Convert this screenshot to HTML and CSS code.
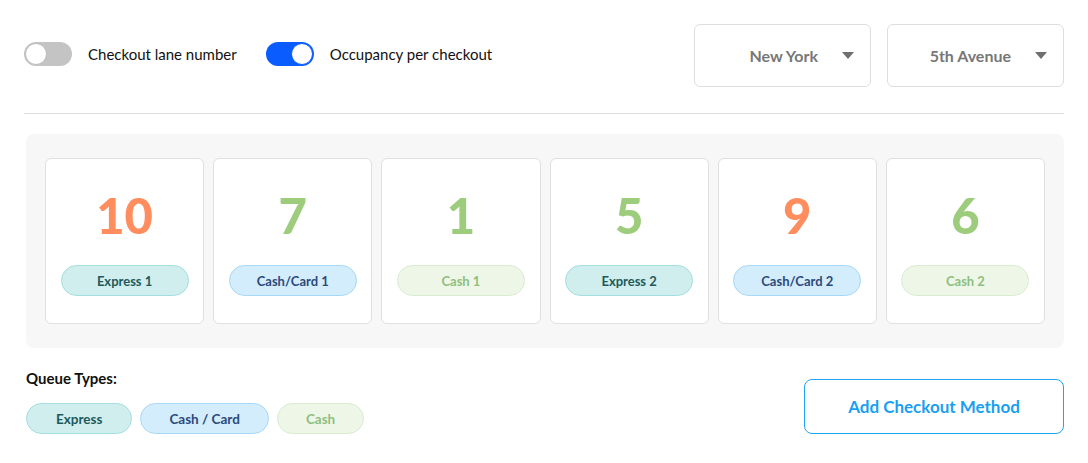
FILE: index.html
```html
<!DOCTYPE html>
<html lang="en">
  <head>
    <meta charset="UTF-8" />
    <meta name="viewport" content="width=device-width, initial-scale=1.0" />
    <title>Checkout Occupancy</title>
    <link rel="stylesheet" href="styles.css">
  </head>
  <body>
    <div class="container">
      <!-- Toolbar -->
      <div class="toolbar">
        <div class="toggles">
          <label class="toggle">
            <span class="switch"></span>
            <span>Checkout lane number</span>
          </label>
          <label class="toggle">
            <span class="switch on"></span>
            <span>Occupancy per checkout</span>
          </label>
        </div>
        <div class="selects">
          <div class="select"><span>New York</span><i class="caret"></i></div>
          <div class="select"><span>5th Avenue</span><i class="caret"></i></div>
        </div>
      </div>

      <hr class="divider" />

      <!-- Checkout lanes -->
      <div class="lanes">
        <div class="lane">
          <div class="count busy">10</div>
          <span class="badge express">Express 1</span>
        </div>
        <div class="lane">
          <div class="count free">7</div>
          <span class="badge card">Cash/Card 1</span>
        </div>
        <div class="lane">
          <div class="count free">1</div>
          <span class="badge cash">Cash 1</span>
        </div>
        <div class="lane">
          <div class="count free">5</div>
          <span class="badge express">Express 2</span>
        </div>
        <div class="lane">
          <div class="count busy">9</div>
          <span class="badge card">Cash/Card 2</span>
        </div>
        <div class="lane">
          <div class="count free">6</div>
          <span class="badge cash">Cash 2</span>
        </div>
      </div>

      <!-- Legend -->
      <div class="footer">
        <div class="legend">
          <h3>Queue Types:</h3>
          <div class="legend-items">
            <span class="badge express">Express</span>
            <span class="badge card">Cash / Card</span>
            <span class="badge cash">Cash</span>
          </div>
        </div>
        <button class="add-btn">Add Checkout Method</button>
      </div>
    </div>
  </body>
</html>
```

FILE: styles.css
```css
body {
  font-family: Lato, "Open Sans", sans-serif;
  margin: 0;
  padding: 0;
  background: #fff;
  color: #111;
}
.container {
  padding: 24px 24px 20px 24px;
}
.toolbar {
  display: flex;
  justify-content: space-between;
  align-items: center;
}
.toggles {
  display: flex;
  align-items: center;
  gap: 26px;
  margin-top: -4px;
}
.toggle {
  display: flex;
  align-items: center;
  gap: 16px;
  font-size: 15px;
}
.toggle + .toggle {
  margin-left: 3px;
}
.switch {
  position: relative;
  width: 48px;
  height: 24px;
  border-radius: 12px;
  background: #c4c4c4;
}
.switch::after {
  content: "";
  position: absolute;
  left: 1px;
  top: 1px;
  width: 20px;
  height: 20px;
  border-radius: 50%;
  background: #fff;
  border: 1px solid #bdbdbd;
}
.switch.on {
  background: #0a5cff;
}
.switch.on::after {
  left: auto;
  right: 1px;
  border-color: #0a5cff;
}
.selects {
  display: flex;
  gap: 16px;
}
.select {
  width: 177px;
  height: 63px;
  box-sizing: border-box;
  border: 1px solid #dedede;
  border-radius: 6px;
  display: flex;
  align-items: center;
  justify-content: flex-end;
  gap: 24px;
  padding-right: 16px;
  font-size: 16px;
  font-weight: 700;
  color: #777;
}
.caret {
  width: 0;
  height: 0;
  border-left: 6px solid transparent;
  border-right: 6px solid transparent;
  border-top: 7px solid #6f6f6f;
}
.divider {
  border: none;
  border-top: 1px solid #ddd;
  margin: 26px 0 20px;
}
.lanes {
  display: flex;
  gap: 9px;
  padding: 24px 19px;
  background: #f7f7f7;
  border-radius: 8px;
  margin-left: 2px;
}
.lane {
  flex: 1;
  height: 166px;
  box-sizing: border-box;
  background: #fff;
  border: 1px solid #e0e0e0;
  border-radius: 6px;
  display: flex;
  flex-direction: column;
  align-items: center;
  padding-top: 27px;
}
.count {
  font-size: 49px;
  font-weight: 900;
  line-height: 58px;
  margin-bottom: 21px;
}
.count.busy {
  color: #ff8d5e;
}
.count.free {
  color: #9dcd7c;
}
.badge {
  display: inline-flex;
  align-items: center;
  justify-content: center;
  height: 31px;
  box-sizing: border-box;
  border-radius: 16px;
  font-size: 13px;
  font-weight: 700;
  border: 1px solid;
}
.lane .badge {
  width: 128px;
}
.badge.express {
  background: #d0eeee;
  border-color: #a3dfe0;
  color: #1e5a5c;
}
.badge.card {
  background: #d3edfd;
  border-color: #a7d8f7;
  color: #2c4a7a;
}
.badge.cash {
  background: #eef6e8;
  border-color: #d9ecd0;
  color: #8fbf7e;
}
.footer {
  display: flex;
  justify-content: space-between;
  align-items: flex-start;
  padding-left: 2px;
}
.legend h3 {
  margin: 21px 0 16px;
  font-size: 15px;
  font-weight: 700;
}
.legend-items {
  display: flex;
  gap: 8px;
}
.legend-items .badge {
  padding: 0 28px;
  font-size: 13.5px;
}
.legend-items .badge.express {
  padding: 0 29px;
}
.add-btn {
  width: 260px;
  height: 55px;
  margin-top: 31px;
  background: #fff;
  border: 1px solid #1ea4f0;
  border-radius: 8px;
  color: #1a9ff0;
  font-family: inherit;
  font-size: 17px;
  font-weight: 700;
}
```
